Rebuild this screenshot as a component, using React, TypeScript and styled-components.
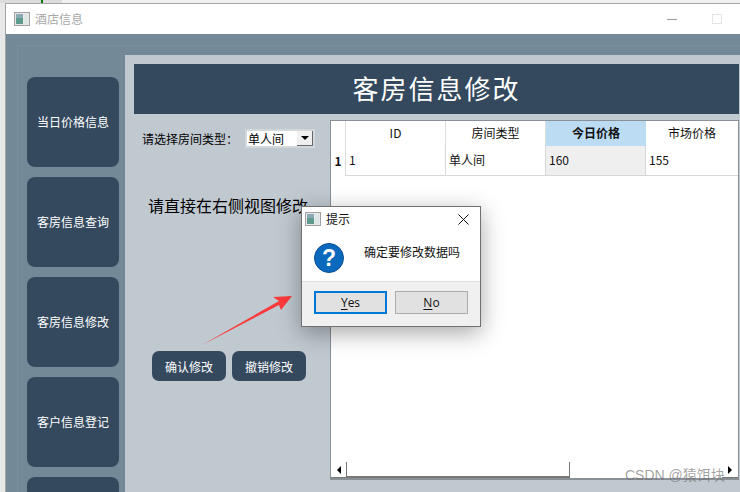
import React from 'react';
import styled, { createGlobalStyle } from 'styled-components';

const GlobalStyle = createGlobalStyle`
  html, body {
    margin: 0;
    padding: 0;
    overflow: hidden;
  }
  * {
    box-sizing: border-box;
  }
`;

const font = `"Noto Sans CJK SC", "Liberation Sans", sans-serif`;
const navy = '#34495e';

const Desktop = styled.div`
  position: relative;
  width: 740px;
  height: 492px;
  overflow: hidden;
  background: #e8e8e8;
  font-family: ${font};
  display: flex;
  flex-direction: column;
`;

const TopStrip = styled.div`
  height: 3px;
  flex: none;
  padding-left: 41px;
  background: linear-gradient(90deg, #dcdcdc 0 62px, #f0f0f0 62px);
`;

const GreenMark = styled.div`
  width: 2px;
  height: 3px;
  background: #0a7a0a;
`;

const AppWindow = styled.div`
  flex: 1;
  min-height: 0;
  margin-left: 5px;
  border-top: 1px solid #a6a6a6;
  border-left: 1px solid #a6a6a6;
  display: flex;
  flex-direction: column;
  background: #748998;
`;

const TitleBar = styled.div`
  height: 30px;
  flex: none;
  display: flex;
  align-items: center;
  background: #fff;
  padding-left: 8px;
`;

const AppTitle = styled.span`
  margin-left: 5px;
  padding-bottom: 2px;
  font-size: 12px;
  color: #a8a8a8;
`;

const WindowControls = styled.div`
  margin-left: auto;
  display: flex;
  align-items: center;
  gap: 35px;
  padding-right: 18px;
`;

const MinimizeMark = styled.span`
  width: 10px;
  height: 1px;
  background: #9a9a9a;
`;

const MaximizeMark = styled.span`
  width: 10px;
  height: 10px;
  border: 1px solid #e4e4e4;
`;

const Body = styled.div`
  flex: 1;
  min-height: 0;
  padding: 11px 0 0 11px;
  display: flex;
`;

const Frame = styled.div`
  flex: 1;
  min-width: 0;
  border-top: 1px solid #7a8e9c;
  border-left: 1px solid #7a8e9c;
  display: flex;
`;

const Sidebar = styled.nav`
  width: 107px;
  flex: none;
  padding: 31px 6px 0 9px;
  display: flex;
  flex-direction: column;
  gap: 10px;
`;

const NavButton = styled.div`
  height: 90px;
  flex: none;
  padding-bottom: 2px;
  border-radius: 8px;
  background: ${navy};
  color: #fff;
  font-size: 12px;
  display: flex;
  align-items: center;
  justify-content: center;
`;

const Panel = styled.main`
  flex: 1;
  min-width: 0;
  margin-top: 9px;
  padding: 9px 1px 0 9px;
  background: #c0c9d0;
  display: flex;
  flex-direction: column;
`;

const Banner = styled.h1`
  height: 50px;
  flex: none;
  margin: 0;
  padding-bottom: 4px;
  background: ${navy};
  color: #fff;
  font-size: 26px;
  font-weight: 400;
  font-family: "Noto Sans CJK SC", serif;
  letter-spacing: 2px;
  display: flex;
  align-items: center;
  justify-content: center;
`;

const Columns = styled.div`
  display: flex;
  margin-top: 6px;
`;

const Controls = styled.div`
  width: 196px;
  flex: none;
  display: flex;
  flex-direction: column;
`;

const RoomRow = styled.div`
  display: flex;
  align-items: center;
  padding: 9px 0 0 8px;
`;

const FieldLabel = styled.label`
  width: 103px;
  font-size: 12px;
  color: #000;
`;

const Select = styled.div`
  width: 70px;
  height: 19px;
  padding: 2px;
  background: #d2d7db;
  display: flex;
`;

const SelectValue = styled.span`
  flex: 1;
  background: #fff;
  font-size: 12px;
  line-height: 15px;
  padding-left: 1px;
  color: #000;
`;

const SelectButton = styled.span`
  width: 16px;
  background: #f0f0f0;
  border-right: 1px solid #696969;
  border-bottom: 1px solid #696969;
  display: flex;
  align-items: center;
  justify-content: center;
  &::after {
    content: '';
    border-left: 4px solid transparent;
    border-right: 4px solid transparent;
    border-top: 4px solid #000;
  }
`;

const Hint = styled.p`
  margin: 46px 0 0 14px;
  font-size: 16px;
  line-height: 22px;
  white-space: nowrap;
  color: #000;
`;

const ActionRow = styled.div`
  display: flex;
  gap: 6px;
  margin: 135px 0 0 18px;
`;

const ActionButton = styled.div`
  width: 74px;
  height: 30px;
  border-radius: 7px;
  background: ${navy};
  color: #fff;
  font-size: 12px;
  display: flex;
  align-items: center;
  justify-content: center;
`;

const TableView = styled.section`
  flex: 1;
  min-width: 0;
  height: 360px;
  background: #fff;
  border: 1px solid #8a9098;
  border-bottom: 2px solid #8a9098;
  display: flex;
  flex-direction: column;
`;

const TableGrid = styled.div`
  display: grid;
  grid-template-columns: 15px repeat(3, 100px) 1fr;
  grid-template-rows: 25px 30px;
  font-size: 12px;
  color: #111;
  > :nth-child(5n) {
    border-right: 0;
  }
`;

const HeaderCell = styled.div<{ $active?: boolean }>`
  display: flex;
  align-items: center;
  justify-content: center;
  padding-bottom: 2px;
  background: ${p => (p.$active ? '#bcdcf4' : '#fff')};
  font-weight: ${p => (p.$active ? 700 : 400)};
  border-right: ${p => (p.$active ? '0' : '1px solid #dcdcdc')};
`;

const RowHead = styled.div`
  display: flex;
  align-items: center;
  justify-content: center;
  padding-bottom: 2px;
  font-weight: 700;
  border-right: 1px solid #dcdcdc;
`;

const Cell = styled.div<{ $current?: boolean }>`
  display: flex;
  align-items: center;
  padding: 0 0 2px 3px;
  background: ${p => (p.$current ? '#efefef' : '#fff')};
  border-right: 1px solid #d8d8d8;
  border-bottom: 1px solid #d8d8d8;
`;

const TableSpace = styled.div`
  flex: 1;
`;

const ScrollBar = styled.div`
  height: 16px;
  flex: none;
  display: flex;
  align-items: center;
`;

const ScrollArrow = styled.span<{ $right?: boolean }>`
  width: 16px;
  height: 16px;
  flex: none;
  display: flex;
  align-items: center;
  justify-content: center;
  border-right: ${p => (p.$right ? '0' : '1px solid #777')};
  border-bottom: 1px solid #777;
  &::after {
    content: '';
    border-top: 4px solid transparent;
    border-bottom: 4px solid transparent;
    ${p => (p.$right ? 'border-left: 4px solid #000;' : 'border-right: 4px solid #000;')}
  }
`;

const ScrollThumb = styled.span`
  width: 223px;
  height: 16px;
  flex: none;
  border-right: 1px solid #777;
  border-bottom: 2px solid #777;
`;

const ScrollTrack = styled.span`
  flex: 1;
`;

const Dialog = styled.div`
  position: absolute;
  left: 301px;
  top: 206px;
  width: 180px;
  height: 121px;
  background: #fff;
  border: 1px solid #707070;
  box-shadow: 0 6px 22px rgba(0, 0, 0, 0.35);
  display: flex;
  flex-direction: column;
`;

const DialogTitle = styled.div`
  height: 24px;
  flex: none;
  padding: 0 11px 0 3px;
  display: flex;
  align-items: center;
  gap: 5px;
  font-size: 12px;
  color: #111;
`;

const TitleText = styled.span`
  padding-bottom: 2px;
`;

const CloseButton = styled.span`
  margin-left: auto;
  display: flex;
`;

const DialogBody = styled.div`
  flex: 1;
  display: flex;
  padding: 12px 0 0 12px;
  gap: 20px;
`;

const DialogText = styled.div`
  font-size: 12px;
  line-height: 18px;
  color: #111;
`;

const DialogFooter = styled.div`
  height: 45px;
  flex: none;
  background: #f0f0f0;
  border-top: 1px solid #dfdfdf;
  padding: 9px 12px 0;
  display: flex;
  gap: 8px;
`;

const DialogButton = styled.div<{ $primary?: boolean }>`
  width: 73px;
  height: 23px;
  background: #e1e1e1;
  border: ${p => (p.$primary ? '2px solid #0078d7' : '1px solid #adadad')};
  font-family: "Open Sans", "Liberation Sans", sans-serif;
  font-size: 12px;
  color: #111;
  display: flex;
  align-items: center;
  justify-content: center;
  u {
    text-underline-offset: 2px;
  }
`;

const ArrowMark = styled.svg`
  position: absolute;
  left: 195px;
  top: 285px;
`;

const Watermark = styled.div`
  position: absolute;
  left: 625px;
  top: 466px;
  font-family: "Liberation Sans", "Noto Sans CJK SC", sans-serif;
  font-size: 14px;
  line-height: 19px;
  white-space: nowrap;
  color: rgba(110, 110, 110, 0.65);
`;

function WinIcon() {
  return (
    <svg width="16" height="14" viewBox="0 0 16 14">
      <rect x="0.5" y="0.5" width="15" height="13" fill="#e8e8e8" stroke="#a0a0a0" />
      <rect x="2" y="2" width="7" height="10" fill="#5f9a8f" />
      <rect x="2" y="2" width="7" height="4" fill="#8aa9b5" />
      <rect x="10" y="2" width="4" height="10" fill="#dfe6e6" />
    </svg>
  );
}

function QuestionIcon() {
  return (
    <svg width="30" height="30" viewBox="0 0 30 30">
      <circle cx="15" cy="15" r="14.5" fill="#0a68bd" stroke="#0d4f92" />
      <text
        x="15"
        y="23"
        textAnchor="middle"
        fontFamily="Liberation Sans, sans-serif"
        fontSize="23"
        fontWeight="700"
        fill="#fff"
      >
        ?
      </text>
    </svg>
  );
}

export default function App() {
  // the fifth button runs off the bottom of the window, its label is not visible
  const navItems = ['当日价格信息', '客房信息查询', '客房信息修改', '客户信息登记', ''];

  return (
    <>
      <GlobalStyle />
      <Desktop>
        <TopStrip>
          <GreenMark />
        </TopStrip>
        <AppWindow>
          <TitleBar>
            <WinIcon />
            <AppTitle>酒店信息</AppTitle>
            <WindowControls>
              <MinimizeMark />
              <MaximizeMark />
            </WindowControls>
          </TitleBar>
          <Body>
            <Frame>
              <Sidebar>
                {navItems.map((item, i) => (
                  <NavButton key={i}>{item}</NavButton>
                ))}
              </Sidebar>
              <Panel>
                <Banner>客房信息修改</Banner>
                <Columns>
                  <Controls>
                    <RoomRow>
                      <FieldLabel>请选择房间类型：</FieldLabel>
                      <Select>
                        <SelectValue>单人间</SelectValue>
                        <SelectButton />
                      </Select>
                    </RoomRow>
                    <Hint>请直接在右侧视图修改</Hint>
                    <ActionRow>
                      <ActionButton>确认修改</ActionButton>
                      <ActionButton>撤销修改</ActionButton>
                    </ActionRow>
                  </Controls>
                  <TableView>
                    <TableGrid>
                      <HeaderCell />
                      <HeaderCell>ID</HeaderCell>
                      <HeaderCell>房间类型</HeaderCell>
                      <HeaderCell $active>今日价格</HeaderCell>
                      <HeaderCell>市场价格</HeaderCell>
                      <RowHead>1</RowHead>
                      <Cell>1</Cell>
                      <Cell>单人间</Cell>
                      <Cell $current>160</Cell>
                      <Cell>155</Cell>
                    </TableGrid>
                    <TableSpace />
                    <ScrollBar>
                      <ScrollArrow />
                      <ScrollThumb />
                      <ScrollTrack />
                      <ScrollArrow $right />
                    </ScrollBar>
                  </TableView>
                </Columns>
              </Panel>
            </Frame>
          </Body>
        </AppWindow>

        <ArrowMark width="110" height="70" viewBox="0 0 110 70">
          <path d="M7 60 L84 16 L78 12 L97 11 L86 25 L84 20 Z" fill="#fb3a3c" />
        </ArrowMark>

        <Dialog>
          <DialogTitle>
            <WinIcon />
            <TitleText>提示</TitleText>
            <CloseButton>
              <svg width="11" height="11" viewBox="0 0 11 11">
                <path d="M0.5 0.5 L10.5 10.5 M10.5 0.5 L0.5 10.5" stroke="#111" fill="none" />
              </svg>
            </CloseButton>
          </DialogTitle>
          <DialogBody>
            <QuestionIcon />
            <DialogText>确定要修改数据吗</DialogText>
          </DialogBody>
          <DialogFooter>
            <DialogButton $primary>
              <span><u>Y</u>es</span>
            </DialogButton>
            <DialogButton>
              <span><u>N</u>o</span>
            </DialogButton>
          </DialogFooter>
        </Dialog>

        <Watermark>CSDN @猿饵块</Watermark>
      </Desktop>
    </>
  );
}
